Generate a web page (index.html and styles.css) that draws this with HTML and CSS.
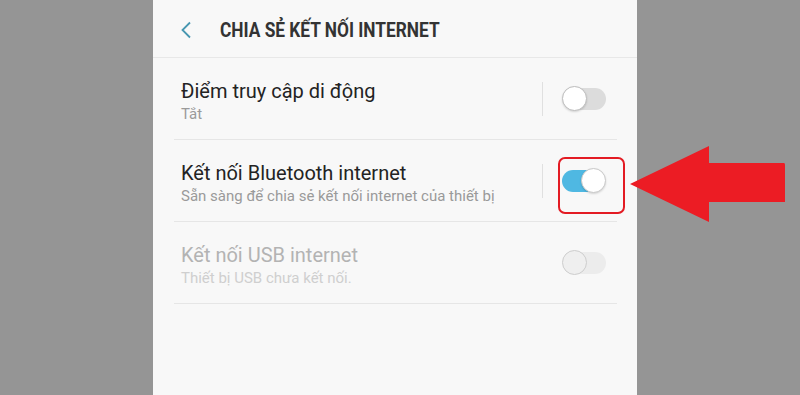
FILE: index.html
```html
<!DOCTYPE html>
<html lang="vi">
<head>
<meta charset="utf-8">
<title>Chia sẻ kết nối Internet</title>
<link rel="stylesheet" href="styles.css">
</head>
<body>
<div class="stage">
  <div class="phone">
    <header class="appbar">
      <svg class="back" width="12" height="18" viewBox="0 0 12 18"><path d="M10 1.5 L2.5 9 L10 16.5" fill="none" stroke="#4797b1" stroke-width="1.8"/></svg>
      <h1 class="title">CHIA SẺ KẾT NỐI INTERNET</h1>
    </header>
    <ul class="list">
      <li class="row">
        <div class="text">
          <div class="label">Điểm truy cập di động</div>
          <div class="sub">Tắt</div>
        </div>
        <span class="sep"></span>
        <span class="switch"><span class="knob"></span></span>
      </li>
      <li class="row">
        <div class="text">
          <div class="label">Kết nối Bluetooth internet</div>
          <div class="sub">Sẵn sàng để chia sẻ kết nối internet của thiết bị</div>
        </div>
        <span class="sep"></span>
        <span class="switch on"><span class="knob"></span></span>
      </li>
      <li class="row disabled">
        <div class="text">
          <div class="label">Kết nối USB internet</div>
          <div class="sub">Thiết bị USB chưa kết nối.</div>
        </div>
        <span class="sep hidden"></span>
        <span class="switch"><span class="knob"></span></span>
      </li>
    </ul>
  </div>
  <div class="highlight"></div>
  <svg class="arrow" width="156" height="78" viewBox="0 0 156 78"><path d="M0 38 L79 0 L79 17 L154 17 Q155 17 155 19 L155 56 L79 56 L79 76 Z" fill="#ec1c24"/></svg>
</div>
</body>
</html>
```
FILE: styles.css
```css
html, body { margin: 0; padding: 0; }
body { background: #959595; font-family: Roboto, "Noto Sans", sans-serif; }
.stage { position: relative; width: 800px; height: 395px; overflow: hidden; }
.phone { margin-left: 153px; width: 484px; height: 395px; background: #f8f8f8; }
.appbar { height: 58px; border-bottom: 1px solid #e8e8e8; display: flex; align-items: center; padding-left: 27px; box-sizing: border-box; }
.back { display: block; margin-top: 3px; }
.title { margin: 2px 0 0 28px; font-size: 20px; font-weight: 700; color: #333; transform: scaleX(0.865); transform-origin: left center; white-space: nowrap; }
.list { list-style: none; margin: 0; padding: 0 20px 0 21px; }
.row { height: 82px; box-sizing: border-box; border-bottom: 1px solid #e6e6e6; display: flex; align-items: center; padding-left: 7px; }
.text { flex: 1; padding-top: 5px; }
.label { font-size: 20px; line-height: 25px; color: #232323; }
.sub { font-size: 15px; line-height: 20px; color: #9a9a9a; }
.disabled .label { color: #b3b3b3; }
.disabled .sub { color: #cfcfcf; }
.sep { width: 1px; height: 34px; background: #e0e0e0; margin-right: 19px; }
.sep.hidden { background: transparent; }
.switch { position: relative; width: 44px; height: 22px; margin-right: 11px; }
.switch::before { content: ""; position: absolute; left: 4px; right: 0; top: 0; bottom: 0; border-radius: 11px; background: #dcdcdc; }
.knob { position: absolute; left: 0; top: -2px; width: 23px; height: 23px; border-radius: 50%; background: #fff; border: 1.5px solid #bdbdbd; box-shadow: 0 1px 2px rgba(0,0,0,0.15); }
.switch.on::before { left: 0; right: 4px; background: #4fb8e2; }
.switch.on .knob { left: auto; right: 0; border-color: #c9c9c9; }
.disabled .switch::before { background: #ececec; }
.disabled .knob { background: #efefef; border-color: #cdcdcd; box-shadow: none; }
.highlight { position: absolute; left: 558px; top: 157px; width: 67px; height: 57px; box-sizing: border-box; border: 2.5px solid #e31b23; border-radius: 7px; }
.arrow { position: absolute; left: 630px; top: 146px; }
```
